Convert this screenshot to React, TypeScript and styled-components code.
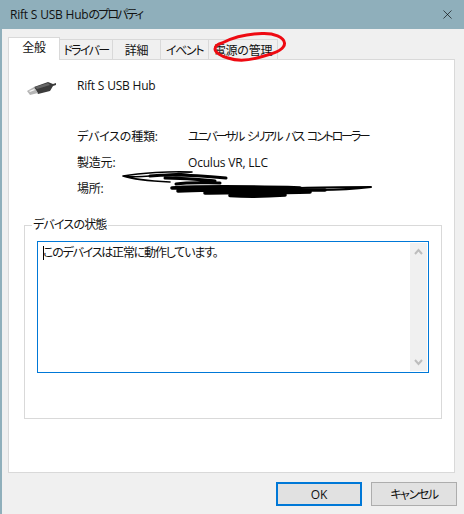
import React from "react";
import styled, { createGlobalStyle } from "styled-components";
import { X } from "lucide-react";

const GlobalStyle = createGlobalStyle`
  html, body { margin: 0; padding: 0; background: #f0f0f0; }
  body {
    font-family: "Open Sans", "Noto Sans CJK JP", sans-serif;
    font-size: 12px;
    letter-spacing: -0.2px;
    font-feature-settings: "palt";
    color: #111;
  }
`;

const Window = styled.div`
  position: relative;
  width: 464px;
  height: 514px;
  overflow: hidden;
  box-sizing: border-box;
  border-left: 2px solid #8fafbb;
  background: #f0f0f0;
`;

const TitleBar = styled.div`
  height: 29px;
  margin-left: -2px;
  padding: 0 10px 1px;
  box-sizing: border-box;
  display: flex;
  align-items: center;
  justify-content: space-between;
  background: #8fafbb;
`;

const Close = styled.div`
  display: flex;
  margin-right: -1px;
`;

const Kana = styled.span<{ $tight?: number }>`
  letter-spacing: ${(p) => p.$tight ?? -1.4}px;
  word-spacing: ${(p) => ((p.$tight ?? -1.4) < -1 ? 3 : 0)}px;
`;

const Tabs = styled.div`
  display: flex;
  align-items: flex-end;
  height: 23px;
  margin: 8px 0 0 6px;
  position: relative;
  z-index: 1;
`;

const Tab = styled.div<{ $width: number; $active?: boolean }>`
  box-sizing: border-box;
  width: ${(p) => p.$width}px;
  height: ${(p) => (p.$active ? 23 : 21)}px;
  display: flex;
  align-items: center;
  justify-content: center;
  white-space: nowrap;
  border: 1px solid #d9d9d9;
  border-left-width: ${(p) => (p.$active ? 1 : 0)}px;
  border-bottom-width: ${(p) => (p.$active ? 0 : 1)}px;
  background: ${(p) => (p.$active ? "#fff" : "#f0f0f0")};
  padding-bottom: ${(p) => (p.$active ? 4 : 0)}px;
`;

const Panel = styled.div`
  box-sizing: border-box;
  width: 447px;
  height: 414px;
  margin: -1px 0 0 6px;
  padding: 13px 15px 0;
  border: 1px solid #d9d9d9;
  background: #fff;
`;

const DeviceHead = styled.div`
  display: flex;
  align-items: center;
  height: 25px;
  margin-bottom: 25px;
`;

const DeviceIcon = styled.svg`
  width: 32px;
  height: 18px;
  margin: 4px 19px 0 2px;
`;

const Props = styled.div`
  display: grid;
  grid-template-columns: 111px 1fr;
  grid-auto-rows: 26px;
  align-items: center;
  margin-left: 53px;
`;

const Group = styled.fieldset`
  box-sizing: border-box;
  width: 417px;
  height: 202px;
  margin: 16px 0 0;
  padding: 8px 12px 0;
  border: 1px solid #d9d9d9;
  border-radius: 0;
`;

const GroupTitle = styled.legend`
  margin-left: -5px;
  padding: 0 1px;
  line-height: 16px;
  letter-spacing: -0.8px;
`;

const StatusBox = styled.div`
  box-sizing: border-box;
  width: 392px;
  height: 132px;
  display: flex;
  justify-content: space-between;
  padding: 1px;
  border: 1px solid #0078d7;
`;

const StatusText = styled.div`
  padding: 2px 0 0 4px;
  line-height: 16px;
  letter-spacing: -1.2px;
  position: relative;
  &::before {
    content: "";
    position: absolute;
    left: 4px;
    top: 3px;
    height: 14px;
    width: 1px;
    background: #000;
  }
`;

const ScrollBar = styled.div`
  width: 17px;
  display: flex;
  flex-direction: column;
  justify-content: space-between;
  align-items: center;
  padding: 3px 0;
  background: #f0f0f0;
`;

const Arrow = styled.svg`
  width: 9px;
  height: 7px;
  margin: 2px 0;
`;

const Footer = styled.div`
  display: flex;
  justify-content: flex-end;
  gap: 9px;
  margin: 9px 7px 0 0;
`;

const Button = styled.div<{ $primary?: boolean }>`
  box-sizing: border-box;
  width: 86px;
  height: 24px;
  display: flex;
  align-items: center;
  justify-content: center;
  background: #e1e1e1;
  border: ${(p) => (p.$primary ? "2px solid #0078d7" : "1px solid #adadad")};
`;

const Markup = styled.svg`
  position: absolute;
  left: -2px;
  top: 0;
  z-index: 2;
  pointer-events: none;
`;

const tabs = [
  { label: "全般", width: 52, active: true, tight: -0.2 },
  { label: "ドライバー", width: 53, tight: -1.6 },
  { label: "詳細", width: 48, tight: -0.2 },
  { label: "イベント", width: 48, tight: -1.4 },
  { label: "電源の管理", width: 69, tight: -0.2 },
];

const props = [
  ["デバイスの種類:", "ユニバーサル シリアル バス コントローラー", -2.2],
  ["製造元:", "Oculus VR, LLC", -0.2],
  ["場所:", "", -0.2],
] as const;

export default function App() {
  return (
    <Window>
      <GlobalStyle />
      <TitleBar>
        <span>
          Rift S USB Hub<Kana $tight={-1.9}>のプロパティ</Kana>
        </span>
        <Close>
          <X size={15} strokeWidth={1} color="#000" />
        </Close>
      </TitleBar>
      <Tabs>
        {tabs.map((t) => (
          <Tab key={t.label} $width={t.width} $active={t.active}>
            <Kana $tight={t.tight}>{t.label}</Kana>
          </Tab>
        ))}
      </Tabs>
      <Panel>
        <DeviceHead>
          <DeviceIcon viewBox="0 0 32 18">
            <path d="M8 8 L22 3 L27 5 L30 4 L30 6 L27 7 L24 12 L12 15 Z" fill="#3b3b3b" />
            <path d="M1 12 L8 8 L12 14 L4 16 Z" fill="#b5b5b5" />
            <path d="M3 12 L8 10 L9 11 L4 13 Z" fill="#f4f4f4" />
            <path d="M9 8 L22 4 L24 6 L11 10 Z" fill="#666" />
          </DeviceIcon>
          <span>Rift S USB Hub</span>
        </DeviceHead>
        <Props>
          {props.map(([k, v, tight]) => (
            <React.Fragment key={k}>
              <span>{k}</span>
              <Kana $tight={tight}>{v}</Kana>
            </React.Fragment>
          ))}
        </Props>
        <Group>
          <GroupTitle>デバイスの状態</GroupTitle>
          <StatusBox>
            <StatusText>このデバイスは正常に動作しています。</StatusText>
            <ScrollBar>
              <Arrow viewBox="0 0 9 7">
                <path d="M1 6 L4.5 2 L8 6" fill="none" stroke="#bdbdbd" strokeWidth="2" />
              </Arrow>
              <Arrow viewBox="0 0 9 7">
                <path d="M1 1 L4.5 5 L8 1" fill="none" stroke="#bdbdbd" strokeWidth="2" />
              </Arrow>
            </ScrollBar>
          </StatusBox>
        </Group>
      </Panel>
      <Footer>
        <Button $primary>OK</Button>
        <Button>
          <Kana>キャンセル</Kana>
        </Button>
      </Footer>
      <Markup width="464" height="514" viewBox="0 0 464 514">
        <path
          d="M222 43 C232 38 246 34 262 33.5 C274 33 284 37 284.5 43 C285 49 276 53 264 56 C252 60 238 61.5 228 58 C220 56 215 52 215 49 C215 46 218 44 222 43"
          fill="none"
          stroke="#ee0a12"
          strokeWidth="3"
          strokeLinecap="round"
        />
        <g fill="none" stroke="#000" strokeLinecap="round" strokeLinejoin="round">
          <path d="M123 176 C140 173 170 171 192 172 C175 174 160 175 150 176 C140 177 130 177 123 176 C132 179 150 181 170 182" strokeWidth="1.6" />
          <path d="M150 176 C170 174 195 175 226 178 M165 178 C190 178 205 180 215 181 M176 184 C190 182 205 183 220 183" strokeWidth="3" />
          <path d="M172 188 C210 186 260 187 300 188 M178 191 C220 189 270 190 325 190 M205 193 C240 192 270 193 310 192 M230 195.5 C255 197 270 196 285 195" strokeWidth="3.6" />
          <path d="M300 188 C325 187 350 187 371 187 C355 189 335 190 320 190" strokeWidth="2" />
        </g>
      </Markup>
    </Window>
  );
}
